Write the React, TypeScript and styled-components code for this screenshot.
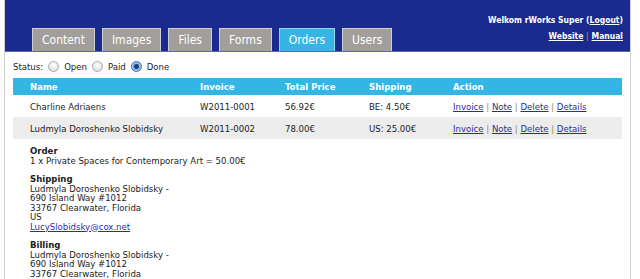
import styled, { createGlobalStyle } from 'styled-components';

const GlobalStyle = createGlobalStyle`
  body {
    margin: 0;
    background: #ffffff;
    font-family: "DejaVu Sans Condensed", "DejaVu Sans", sans-serif;
    font-size: 9.5px;
    color: #222222;
  }
`;

type Order = {
  name: string;
  invoice: string;
  total: string;
  shipping: string;
};

const orders: Order[] = [
  { name: 'Charline Adriaens', invoice: 'W2011-0001', total: '56.92€', shipping: 'BE: 4.50€' },
  { name: 'Ludmyla Doroshenko Slobidsky', invoice: 'W2011-0002', total: '78.00€', shipping: 'US: 25.00€' },
];

const tabs = ['Content', 'Images', 'Files', 'Forms', 'Orders', 'Users'];
const actions = ['Invoice', 'Note', 'Delete', 'Details'];

export default function App() {
  return (
    <Page>
      <GlobalStyle />
      <Header>
        <Tabs>
          {tabs.map((tab) => (
            <Tab key={tab} $active={tab === 'Orders'}>{tab}</Tab>
          ))}
        </Tabs>
        <UserBox>
          <div>Welkom rWorks Super (<HeaderLink href="#">Logout</HeaderLink>)</div>
          <div>
            <HeaderLink href="#">Website</HeaderLink> <Sep>|</Sep> <HeaderLink href="#">Manual</HeaderLink>
          </div>
        </UserBox>
      </Header>
      <Body>
        <Status>
          Status:
          <RadioItem><Radio />Open</RadioItem>
          <RadioItem><Radio />Paid</RadioItem>
          <RadioItem><Radio $checked />Done</RadioItem>
        </Status>
        <Table>
          <thead>
            <tr>
              <Th style={{ width: 153 }}>Name</Th>
              <Th style={{ width: 68 }}>Invoice</Th>
              <Th style={{ width: 67 }}>Total Price</Th>
              <Th style={{ width: 67 }}>Shipping</Th>
              <Th>Action</Th>
            </tr>
          </thead>
          <tbody>
            {orders.map((order, index) => (
              <Row key={order.invoice} $odd={index % 2 === 1}>
                <Td>{order.name}</Td>
                <Td>{order.invoice}</Td>
                <Td>{order.total}</Td>
                <Td>{order.shipping}</Td>
                <Td>
                  {actions.map((action, i) => (
                    <span key={action}>
                      {i > 0 && <Sep> | </Sep>}
                      <ActionLink href="#">{action}</ActionLink>
                    </span>
                  ))}
                </Td>
              </Row>
            ))}
          </tbody>
        </Table>
        <Details>
          <Block>
            <BlockTitle>Order</BlockTitle>
            <div>1 x Private Spaces for Contemporary Art = 50.00€</div>
          </Block>
          <Block>
            <BlockTitle>Shipping</BlockTitle>
            <div>Ludmyla Doroshenko Slobidsky -</div>
            <div>690 Island Way #1012</div>
            <div>33767 Clearwater, Florida</div>
            <div>US</div>
            <MailLink href="#">LucySlobidsky@cox.net</MailLink>
          </Block>
          <Block>
            <BlockTitle>Billing</BlockTitle>
            <div>Ludmyla Doroshenko Slobidsky -</div>
            <div>690 Island Way #1012</div>
            <div>33767 Clearwater, Florida</div>
            <div>US</div>
            <MailLink href="#">LucySlobidsky@cox.net</MailLink>
          </Block>
        </Details>
      </Body>
    </Page>
  );
}

const Page = styled.div`
  width: 627px;
  margin-left: 4px;
  height: 279px;
  overflow: hidden;
  border-left: 1px solid #cfcfcf;
  border-right: 1px solid #cfcfcf;
  box-sizing: border-box;
`;

const Header = styled.div`
  height: 52px;
  background: #1b2a8e;
  display: flex;
  justify-content: space-between;
  align-items: flex-start;
  border-bottom: 1px solid #5a66b0;
  box-sizing: border-box;
  margin: 0 -1px;
`;

const Tabs = styled.div`
  display: flex;
  gap: 7px;
  align-self: flex-end;
  padding-left: 28px;
`;

const Tab = styled.div<{ $active?: boolean }>`
  height: 22px;
  line-height: 22px;
  padding: 0 9px;
  background: ${(p) => (p.$active ? '#35b5e6' : '#a19e9b')};
  border: 1px solid ${(p) => (p.$active ? '#8fd6f2' : '#cfcfd6')};
  border-bottom: none;
  color: #ffffff;
  font-size: 12px;
`;

const UserBox = styled.div`
  padding: 12px 8px 0 0;
  text-align: right;
  color: #ffffff;
  font-weight: bold;
  font-size: 8.5px;
  line-height: 16px;
`;

const HeaderLink = styled.a`
  color: #ffffff;
  text-decoration: underline;
`;

const Sep = styled.span`
  color: #888888;
`;

const Body = styled.div`
  padding: 0 8px;
`;

const Status = styled.div`
  display: flex;
  align-items: center;
  gap: 4px;
  height: 26px;
  padding-top: 2px;
  box-sizing: border-box;
`;

const RadioItem = styled.label`
  display: flex;
  align-items: center;
  gap: 5px;
  margin-left: 1px;
`;

const Radio = styled.span<{ $checked?: boolean }>`
  width: 9px;
  height: 9px;
  border-radius: 50%;
  border: 1px solid ${(p) => (p.$checked ? '#3d6fb8' : '#a8a8a8')};
  background: ${(p) =>
    p.$checked
      ? 'radial-gradient(circle, #1f3f7a 0 2px, #7fb2e8 3px, #a9d0f5 5px)'
      : 'radial-gradient(circle at 50% 30%, #ffffff, #d6d6d6)'};
`;

const Table = styled.table`
  width: 609px;
  border-collapse: collapse;
  table-layout: fixed;
`;

const Th = styled.th`
  background: #33b5e6;
  color: #ffffff;
  font-weight: bold;
  text-align: left;
  height: 17px;
  padding: 0 0 0 17px;
`;

const Row = styled.tr<{ $odd?: boolean }>`
  background: ${(p) => (p.$odd ? '#ececec' : '#ffffff')};
`;

const Td = styled.td`
  height: 22px;
  padding: 0 0 0 17px;
  white-space: nowrap;
`;

const ActionLink = styled.a`
  color: #2b2b9c;
  text-decoration: underline;
`;

const Details = styled.div`
  padding: 7px 0 0 17px;
  line-height: 9.5px;
`;

const Block = styled.div`
  margin-bottom: 9px;
`;

const BlockTitle = styled.div`
  font-weight: bold;
`;

const MailLink = styled.a`
  color: #2a2ab0;
  text-decoration: underline;
`;
